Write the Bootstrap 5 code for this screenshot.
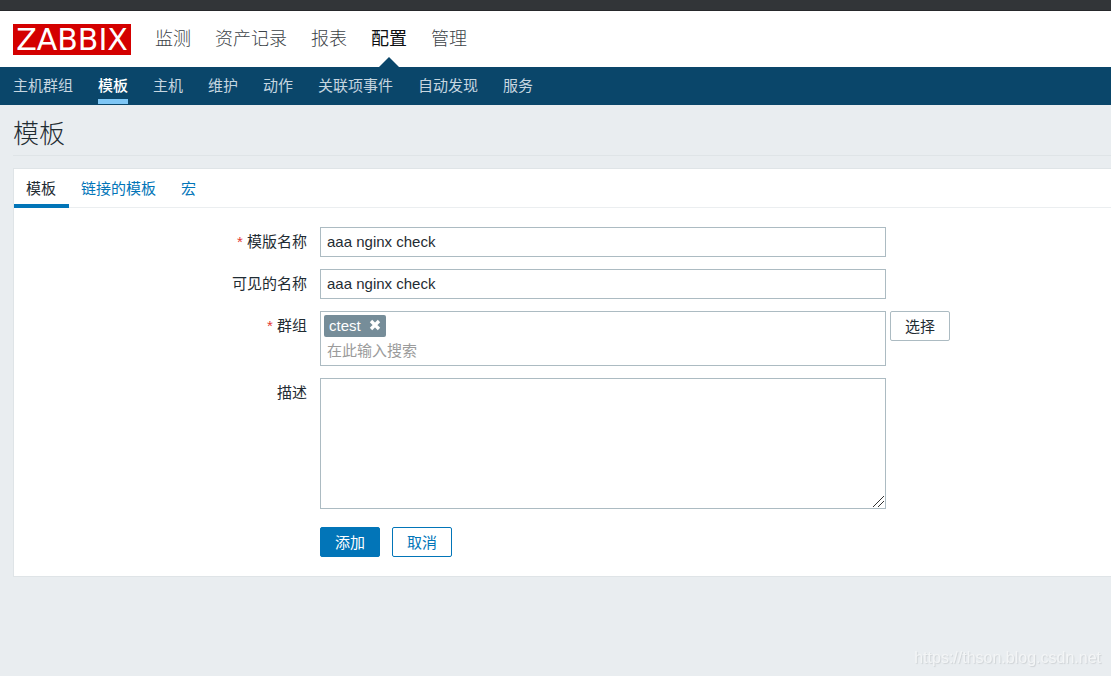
<!DOCTYPE html>
<html lang="zh-CN">
<head>
<meta charset="utf-8">
<meta name="viewport" content="width=device-width, initial-scale=1">
<title>模板</title>
<link href="https://cdn.jsdelivr.net/npm/bootstrap@5.3.0/dist/css/bootstrap.min.css" rel="stylesheet">
<style>
  body { font-family: "Liberation Sans", "Noto Sans CJK SC", sans-serif; font-size: 15px; line-height: 20px; color: #1f2c33; background: #e9edf0; }
  a { text-decoration: none; }
  .top-strip { height: 11px; background: #323538; border-bottom: 1px solid #26282b; }
  .main-bar { height: 56px; padding: 0 12px 0 13px; }
  .brand-logo { width: 118px; height: 31px; background: #d40000; color: #fff; font: 30px/31px "DejaVu Sans", sans-serif; margin-right: 24px; }
  .brand-logo:hover { color: #fff; }
  .main-menu { gap: 24px; height: 56px; font-size: 18px; line-height: 56px; }
  .main-menu a { color: #3c4247; font-weight: 300; position: relative; display: block; }
  .main-menu a.active { color: #0e1012; font-weight: 400; }
  .main-menu a.active::after { content: ""; position: absolute; left: 50%; bottom: 0; margin-left: -10px; border: 10px solid transparent; border-top: 0; border-bottom-color: #0a466a; }
  .sub-bar { height: 38px; background: #0a466a; padding: 0 12px 0 13px; }
  .sub-menu { gap: 25px; }
  .sub-menu a { color: #c6d6e0; display: block; height: 37px; padding-top: 2px; border-bottom: 5px solid transparent; line-height: 34px; }
  .sub-menu a.active { color: #fff; font-weight: 500; border-color: #7ec6f5; }
  main { padding-left: 13px; }
  .page-title { font-size: 26px; line-height: 30px; font-weight: 300; margin: 0; padding: 14px 0 6px; border-bottom: 1px solid #dfe4e7; }
  .panel { background: #fff; border: 1px solid #dfe4e7; border-right: 0; margin-top: 12px; }
  .panel-tabs { border-bottom: 1px solid #ebeef0; height: 39px; }
  .panel-tabs a { color: #0275b8; padding: 10px 13px 5px 12px; height: 39px; border-bottom: 4px solid transparent; }
  .panel-tabs a.active { color: #1f2c33; border-color: #0275b8; }
  .panel-form { gap: 12px; padding: 19px 0; }
  .field-label { width: 306px; padding: 5px 13px 5px 0; text-align: right; flex-shrink: 0; }
  .star { color: #e33734; }
  .field { width: 566px; }
  .field-box { border: 1px solid #acbbc2; border-radius: 0; background: #fff; color: #1f2c33; font-size: 15px; line-height: 20px; padding: 4px 6px; }
  .field-box:focus, .field-box:focus-within { border-color: #0275b8; box-shadow: none; }
  textarea.field-box { height: 131px; resize: both; }
  textarea.field-box::-webkit-resizer { background: url("data:image/svg+xml,%3Csvg xmlns='http://www.w3.org/2000/svg' width='15' height='15'%3E%3Cpath d='M3 14L14 3M8 14L14 8' stroke='%23333'/%3E%3C/svg%3E") no-repeat right bottom; }
  .picker { height: 55px; padding: 3px; }
  .chip { height: 22px; background: #768d99; color: #fff; border-radius: 2px; padding: 0 5px; gap: 8px; width: 62px; }
  .chip button { line-height: 0; padding-bottom: 2px; }
  .picker input { font-size: 15px; line-height: 20px; padding: 0 3px; margin-top: 2px; outline: 0; height: 22px; }
  .picker input::placeholder { color: #9b9b9b; opacity: 1; }
  .action { width: 60px; height: 30px; padding: 1px 0 0; font-size: 15px; line-height: 28px; border-radius: 2px; border: 1px solid #0275b8; color: #0275b8; background: #fff; }
  .action-main { background: #0275b8; color: #fff; }
  .action-pick { border-color: #acbbc2; color: #1f2c33; }
  .form-actions { padding: 6px 0 0 306px; gap: 12px; }
  .watermark { right: 10px; bottom: 8px; font-size: 16px; line-height: 20px; color: #f3f5f6; text-shadow: 1px 1px 1px #cfd3d6; }
</style>
<script src="https://cdn.jsdelivr.net/npm/bootstrap@5.3.0/dist/js/bootstrap.bundle.min.js"></script>
</head>
<body>
<div class="top-strip"></div>
<header>
  <nav class="main-bar bg-white d-flex align-items-center">
    <a href="#" class="brand-logo text-center">ZABBIX</a>
    <ul class="main-menu list-unstyled d-flex mb-0">
      <li><a href="#">监测</a></li>
      <li><a href="#">资产记录</a></li>
      <li><a href="#">报表</a></li>
      <li><a href="#" class="active">配置</a></li>
      <li><a href="#">管理</a></li>
    </ul>
  </nav>
  <nav class="sub-bar">
    <ul class="sub-menu list-unstyled d-flex mb-0">
      <li><a href="#">主机群组</a></li>
      <li><a href="#" class="active">模板</a></li>
      <li><a href="#">主机</a></li>
      <li><a href="#">维护</a></li>
      <li><a href="#">动作</a></li>
      <li><a href="#">关联项事件</a></li>
      <li><a href="#">自动发现</a></li>
      <li><a href="#">服务</a></li>
    </ul>
  </nav>
</header>
<main>
  <h1 class="page-title">模板</h1>
  <section class="panel">
    <nav class="panel-tabs d-flex">
      <a href="#" class="active">模板</a>
      <a href="#">链接的模板</a>
      <a href="#">宏</a>
    </nav>
    <form class="panel-form d-flex flex-column">
      <div class="d-flex">
        <label class="field-label" for="tname"><span class="star">*</span> 模版名称</label>
        <div class="field"><input id="tname" class="form-control field-box" type="text" value="aaa nginx check"></div>
      </div>
      <div class="d-flex">
        <label class="field-label" for="vname">可见的名称</label>
        <div class="field"><input id="vname" class="form-control field-box" type="text" value="aaa nginx check"></div>
      </div>
      <div class="d-flex align-items-start">
        <label class="field-label" for="groups"><span class="star">*</span> 群组</label>
        <div class="field field-box picker d-flex flex-column">
          <span class="chip d-flex align-items-center">ctest
            <button type="button" class="border-0 bg-transparent px-0 pt-0" aria-label="移除">
              <svg width="12" height="12" viewBox="0 0 12 12"><path d="M2 2l8 8M10 2l-8 8" stroke="#fff" stroke-width="3.4"/></svg>
            </button>
          </span>
          <input id="groups" class="border-0 bg-transparent w-100" type="text" placeholder="在此输入搜索">
        </div>
        <button type="button" class="btn action action-pick ms-1">选择</button>
      </div>
      <div class="d-flex">
        <label class="field-label" for="desc">描述</label>
        <div class="field"><textarea id="desc" class="form-control field-box"></textarea></div>
      </div>
      <div class="form-actions d-flex">
        <button type="submit" class="btn action action-main">添加</button>
        <button type="button" class="btn action">取消</button>
      </div>
    </form>
  </section>
</main>
<div class="watermark position-fixed">https://thson.blog.csdn.net</div>
</body>
</html>
